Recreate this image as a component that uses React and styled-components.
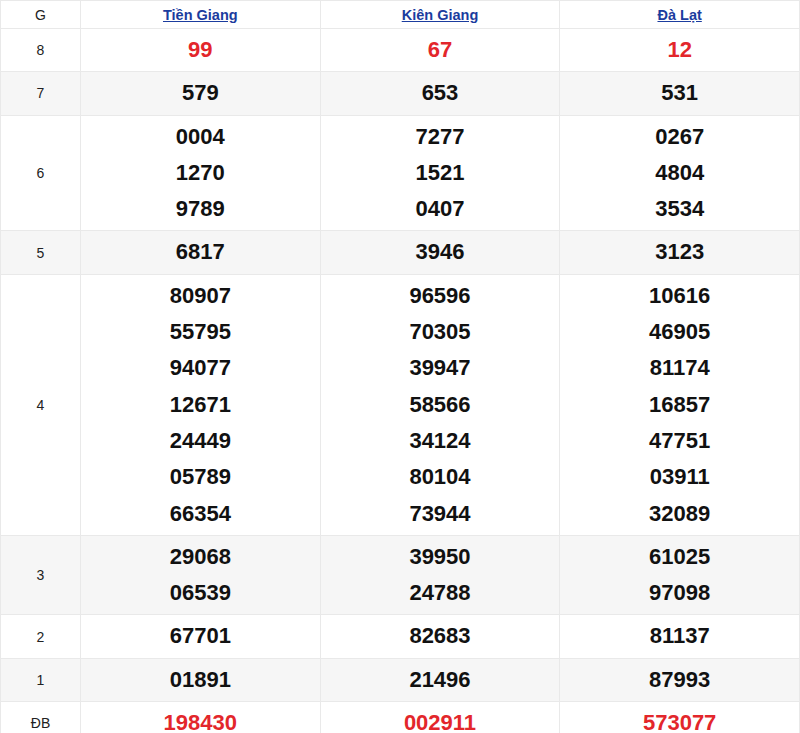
import styled, { createGlobalStyle } from "styled-components";

const GlobalStyle = createGlobalStyle`
  html, body {
    margin: 0;
    padding: 0;
    background: #fff;
    font-family: "Liberation Sans", Arial, sans-serif;
  }
`;

const provinces = ["Tiền Giang", "Kiên Giang", "Đà Lạt"];

// mỗi giải: nhãn + danh sách số của từng đài
const prizes = [
  { label: "8", red: true, values: [["99"], ["67"], ["12"]] },
  { label: "7", values: [["579"], ["653"], ["531"]] },
  {
    label: "6",
    values: [
      ["0004", "1270", "9789"],
      ["7277", "1521", "0407"],
      ["0267", "4804", "3534"],
    ],
  },
  { label: "5", values: [["6817"], ["3946"], ["3123"]] },
  {
    label: "4",
    values: [
      ["80907", "55795", "94077", "12671", "24449", "05789", "66354"],
      ["96596", "70305", "39947", "58566", "34124", "80104", "73944"],
      ["10616", "46905", "81174", "16857", "47751", "03911", "32089"],
    ],
  },
  {
    label: "3",
    values: [
      ["29068", "06539"],
      ["39950", "24788"],
      ["61025", "97098"],
    ],
  },
  { label: "2", values: [["67701"], ["82683"], ["81137"]] },
  { label: "1", values: [["01891"], ["21496"], ["87993"]] },
  { label: "ĐB", red: true, values: [["198430"], ["002911"], ["573077"]] },
];

const App = () => {
  return (
    <>
      <GlobalStyle />
      <Table>
        <colgroup>
          <col style={{ width: 80 }} />
          <col />
          <col />
          <col />
        </colgroup>
        <thead>
          <tr>
            <HeadCell>G</HeadCell>
            {provinces.map((p) => (
              <HeadCell key={p}>
                <ProvinceLink href="#">{p}</ProvinceLink>
              </HeadCell>
            ))}
          </tr>
        </thead>
        <tbody>
          {prizes.map((prize, i) => (
            <Row key={prize.label} $shaded={i % 2 === 1}>
              <LabelCell>{prize.label}</LabelCell>
              {prize.values.map((list, j) => (
                <NumberCell key={j}>
                  {list.map((n, k) => (
                    <Number key={k} $red={prize.red}>
                      {n}
                    </Number>
                  ))}
                </NumberCell>
              ))}
            </Row>
          ))}
        </tbody>
      </Table>
    </>
  );
};

export default App;

const Table = styled.table`
  width: 800px;
  border-collapse: collapse;
  table-layout: fixed;
  font-family: "Liberation Sans", Arial, sans-serif;
`;

const HeadCell = styled.th`
  height: 27px;
  padding: 0;
  border: 1px solid #e9e9e9;
  font-size: 14px;
  font-weight: normal;
  color: #222;
  text-align: center;
  vertical-align: middle;
`;

const ProvinceLink = styled.a`
  color: #1b3c9e;
  font-weight: bold;
  font-size: 14.5px;
  text-decoration: underline;
`;

const Row = styled.tr`
  background: ${(p) => (p.$shaded ? "#f6f6f6" : "#ffffff")};
`;

const LabelCell = styled.td`
  padding: 3px 0;
  border: 1px solid #e9e9e9;
  font-size: 14px;
  color: #222;
  text-align: center;
  vertical-align: middle;
`;

const NumberCell = styled.td`
  padding: 3px 0;
  border: 1px solid #e9e9e9;
  text-align: center;
  vertical-align: middle;
`;

const Number = styled.div`
  line-height: 36.3px;
  font-size: 22px;
  font-weight: bold;
  color: ${(p) => (p.$red ? "#e3262b" : "#111")};
`;
